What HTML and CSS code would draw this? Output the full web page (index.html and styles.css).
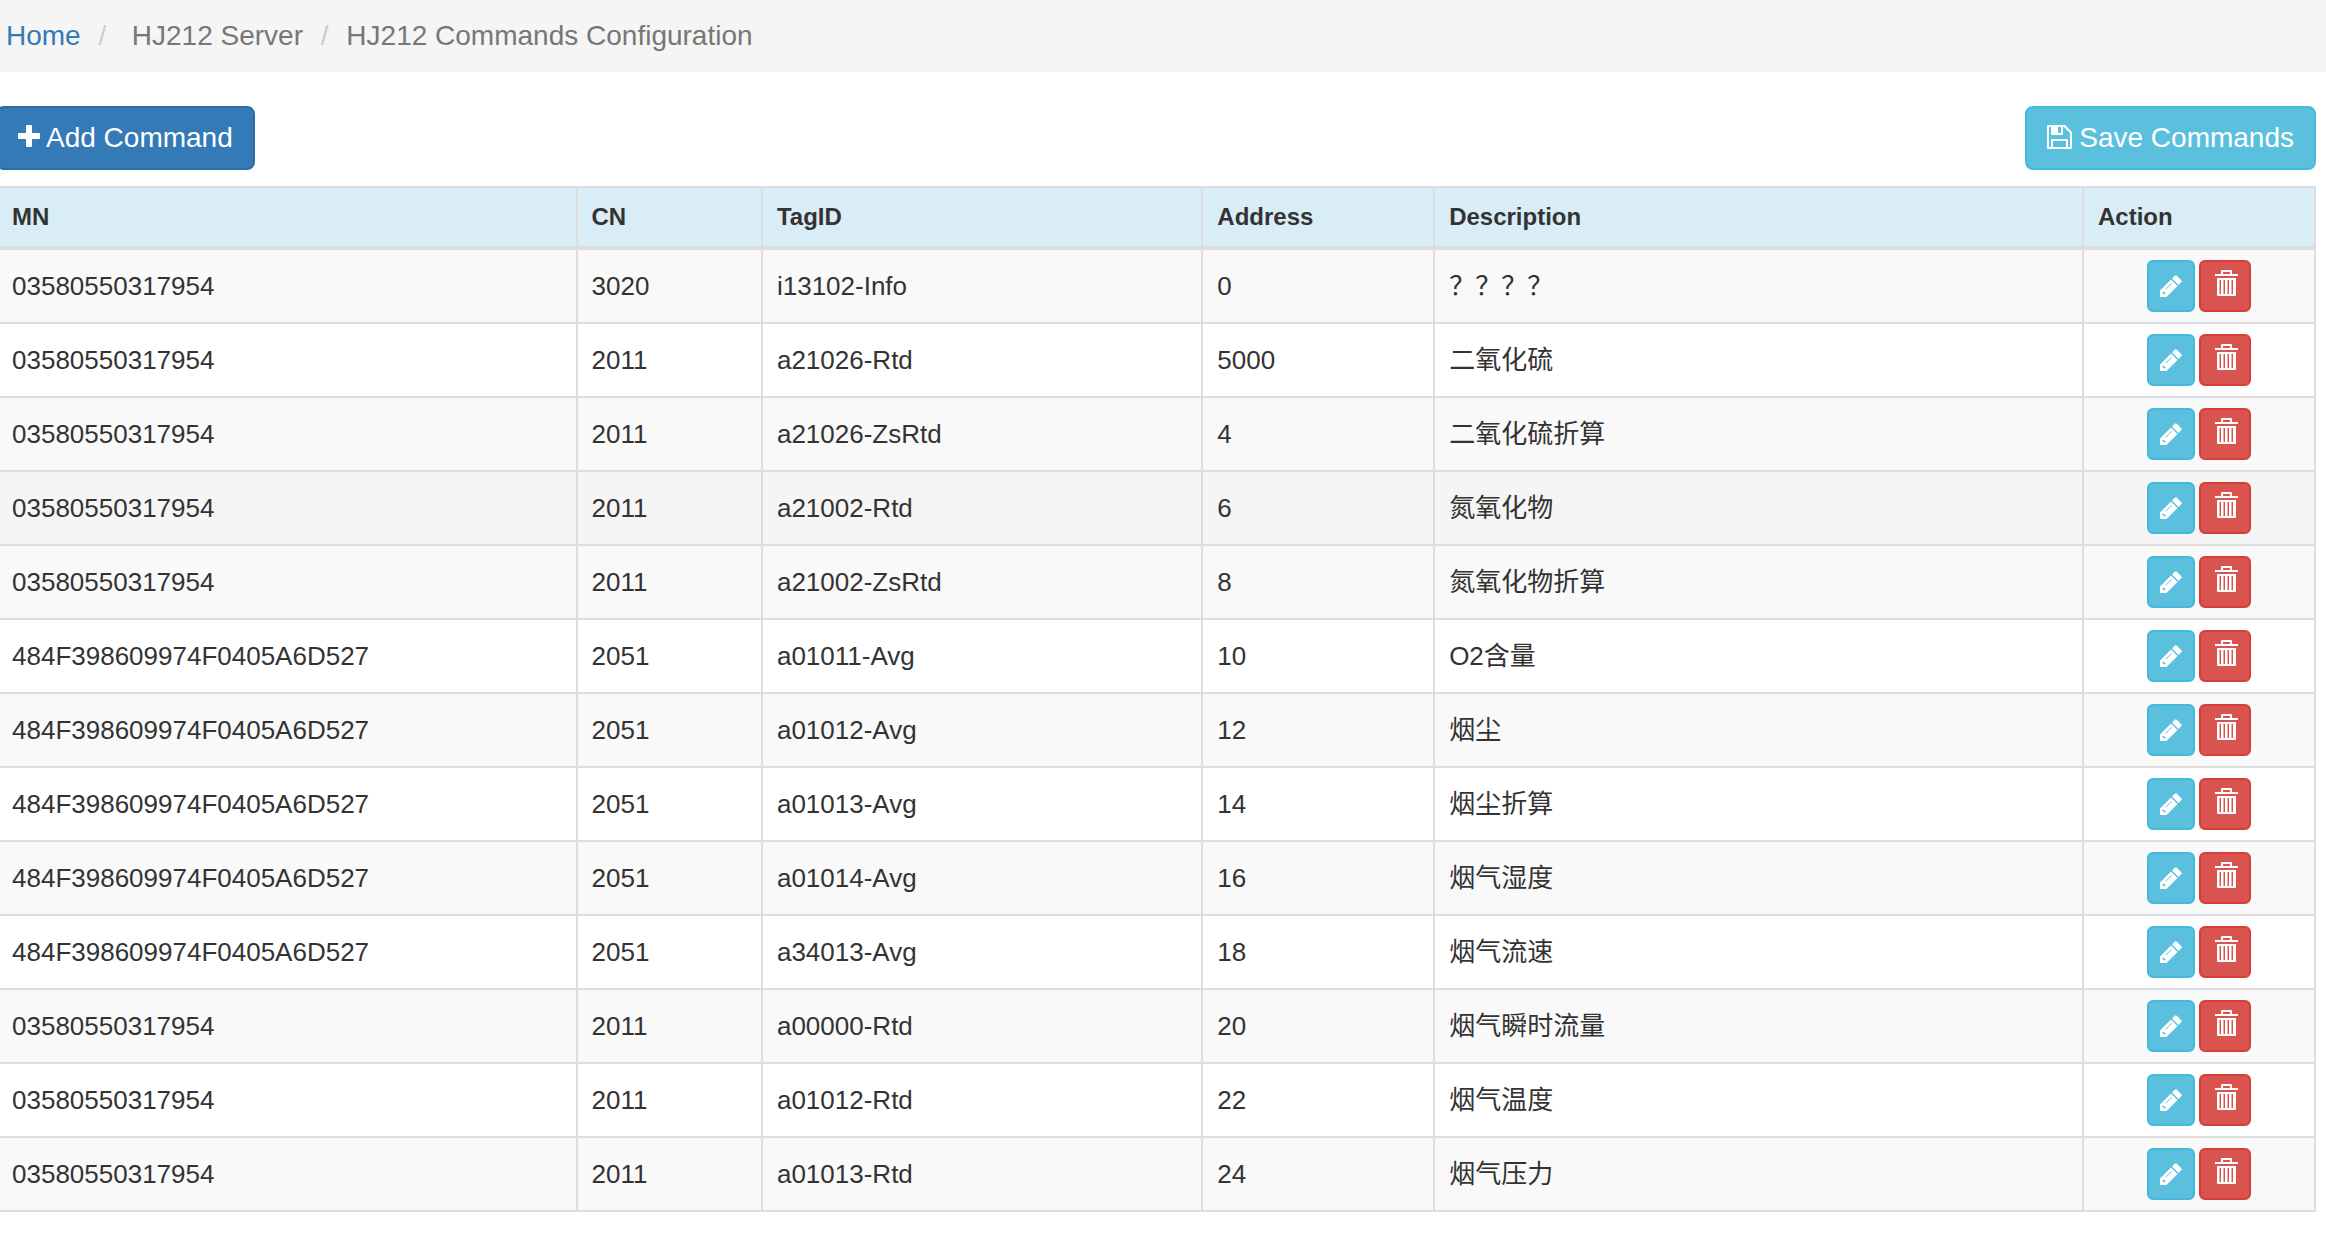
FILE: index.html
```
<!DOCTYPE html>
<html lang="en">
<head>
<meta charset="utf-8">
<title>HJ212 Commands Configuration</title>
<link rel="stylesheet" href="styles.css">
</head>
<body>
<svg class="sprite" aria-hidden="true">
  <symbol id="icon-pencil" viewBox="0 0 22 22">
    <path fill-rule="evenodd" d="M0 15.500 11 4.500 17.500 11 6.500 22H0zM2.500 16.500v2h1l1 1.200 1.300-1.200-1.500-1.200zM6 14.500l6-6-.5-.5-6 6z"/>
    <path d="M12 3.500 14.800.7q1-1 2 0l4.500 4.500q1 1 0 2L18.500 10z"/>
  </symbol>
  <symbol id="icon-trash" viewBox="0 0 24 26">
    <path fill-rule="evenodd" d="M0 4h6V1q0-1 1-1h9q1 0 1 1v3h6v2H0zM8 2v2h7V2zM2 8h19v17q0 1-1 1H3q-1 0-1-1zM4.500 10v14h1.500V10zM8.500 10v14H10V10zM12.500 10v14H14V10zM16.500 10v14H18V10z"/>
  </symbol>
</svg>
<nav class="breadcrumb-bar" aria-label="Breadcrumb">
  <ol class="breadcrumb">
    <li><a href="#">Home</a></li>
    <li>&nbsp;HJ212 Server</li>
    <li>HJ212 Commands Configuration</li>
  </ol>
</nav>
<main class="content">
  <div class="toolbar">
    <button class="btn btn-primary" type="button"><svg class="icon-plus" viewBox="0 0 22 22" aria-hidden="true"><path d="M8 1q0-1 1-1h4q1 0 1 1v7h7q1 0 1 1v4q0 1-1 1h-7v7q0 1-1 1H9q-1 0-1-1v-7H1q-1 0-1-1V9q0-1 1-1h7z"/></svg>Add Command</button>
    <button class="btn btn-info" type="button"><svg class="icon-save" viewBox="0 0 25 24" aria-hidden="true"><path fill-rule="evenodd" d="M1 0h17l7 7v16q0 1-1 1H1q-1 0-1-1V1q0-1 1-1zM2 2v20h2v-7q0-1 1-1h15q1 0 1 1v7h2V8l-6-6h-1v7q0 1-1 1H5q-1 0-1-1V2zM11 2v6h3V2zM6 16v6h13v-6z"/></svg>Save Commands</button>
  </div>
  <table class="commands">
    <colgroup><col class="col-mn"><col class="col-cn"><col class="col-tag"><col class="col-address"><col><col class="col-action"></colgroup>
    <thead>
      <tr><th scope="col">MN</th><th scope="col">CN</th><th scope="col">TagID</th><th scope="col">Address</th><th scope="col">Description</th><th scope="col">Action</th></tr>
    </thead>
    <tbody id="rows"></tbody>
  </table>
</main>
<script src="app.js"></script>
</body>
</html>
```
FILE: styles.css
```
* { box-sizing: border-box; }

body {
  margin: 0;
  overflow-x: hidden;
  background: #fff;
  color: #333;
  font-family: "Liberation Sans", Arial, "Noto Sans CJK SC", sans-serif;
  font-size: 26px;
  line-height: 36px;
}

svg { fill: currentColor; }
.sprite { display: none; }

.breadcrumb-bar {
  padding: 16px 6px;
  background: #f5f5f5;
  color: #777;
  font-size: 28px;
  line-height: 40px;
}

.breadcrumb { margin: 0; padding: 0; list-style: none; }
.breadcrumb li { display: inline; }
.breadcrumb li + li::before { content: "/\00a0"; padding: 0 10px; color: #ccc; }
.breadcrumb li:nth-child(3)::before { padding-left: 10px; }
.breadcrumb a { color: #337ab7; text-decoration: none; }

/* The content bleeds slightly past the left edge of the window. */
.content { margin: 34px 10px 0 -4px; }

.toolbar {
  display: flex;
  justify-content: space-between;
  margin-bottom: 16px;
}

.btn {
  display: flex;
  align-items: center;
  height: 64px;
  padding: 0 20px;
  border: 2px solid;
  border-radius: 8px;
  color: #fff;
  font: inherit;
  font-size: 28px;
  cursor: pointer;
}

.btn-primary { background: #337ab7; border-color: #2e6da4; }
.btn-info { background: #5bc0de; border-color: #46b8da; }
.btn-danger { background: #d9534f; border-color: #d43f3a; }

.icon-plus { width: 22px; height: 22px; margin: 0 6px 4px 0; }
.icon-save { width: 25px; height: 24px; margin: 0 7px 2px 0; }

.commands {
  width: 100%;
  table-layout: fixed;
  border-collapse: separate;
  border-spacing: 0;
  border-top: 2px solid #ddd;
  border-right: 2px solid #ddd;
}

.col-mn { width: 25%; }
.col-cn { width: 8%; }
.col-tag { width: 19%; }
.col-address { width: 10%; }
.col-action { width: 232px; }

.commands th,
.commands td {
  padding: 10px 14px;
  border-left: 2px solid #ddd;
  border-bottom: 2px solid #ddd;
  text-align: left;
  vertical-align: middle;
}

.commands th {
  height: 62px;
  border-bottom-width: 4px;
  background: #d9edf7;
  font-size: 24px;
}

.commands td { height: 74px; }
.commands tbody tr:nth-child(odd) { background: #f9f9f9; }
.commands tbody tr.active { background: #f5f5f5; }

.actions { display: flex; justify-content: center; gap: 4px; }
.actions .btn { height: 52px; padding: 0 12px; border-radius: 6px; }
.icon-pencil { width: 22px; height: 22px; margin: 0 -1px; }
.icon-trash { width: 24px; height: 26px; margin: 0 -2px 6px 2px; }
```
FILE: app.js
```
const commands = [
  ["03580550317954", "3020", "i13102-Info", "0", "????"],
  ["03580550317954", "2011", "a21026-Rtd", "5000", "二氧化硫"],
  ["03580550317954", "2011", "a21026-ZsRtd", "4", "二氧化硫折算"],
  ["03580550317954", "2011", "a21002-Rtd", "6", "氮氧化物"],
  ["03580550317954", "2011", "a21002-ZsRtd", "8", "氮氧化物折算"],
  ["484F398609974F0405A6D527", "2051", "a01011-Avg", "10", "O2含量"],
  ["484F398609974F0405A6D527", "2051", "a01012-Avg", "12", "烟尘"],
  ["484F398609974F0405A6D527", "2051", "a01013-Avg", "14", "烟尘折算"],
  ["484F398609974F0405A6D527", "2051", "a01014-Avg", "16", "烟气湿度"],
  ["484F398609974F0405A6D527", "2051", "a34013-Avg", "18", "烟气流速"],
  ["03580550317954", "2011", "a00000-Rtd", "20", "烟气瞬时流量"],
  ["03580550317954", "2011", "a01012-Rtd", "22", "烟气温度"],
  ["03580550317954", "2011", "a01013-Rtd", "24", "烟气压力"]
];

/* The first description holds full-width question marks. */
commands[0][4] = "\uFF1F".repeat(4);

const button = (style, icon, label) =>
  `<button class="btn ${style}" type="button" aria-label="${label}"><svg class="icon-${icon}" aria-hidden="true"><use href="#icon-${icon}"/></svg></button>`;

document.getElementById("rows").innerHTML = commands.map((cells, i) =>
  `<tr${i === 3 ? ' class="active"' : ""}>` +
  cells.map(text => `<td lang="zh-CN">${text}</td>`).join("") +
  `<td><div class="actions">${button("btn-info", "pencil", "Edit")}${button("btn-danger", "trash", "Delete")}</div></td></tr>`
).join("");
```
